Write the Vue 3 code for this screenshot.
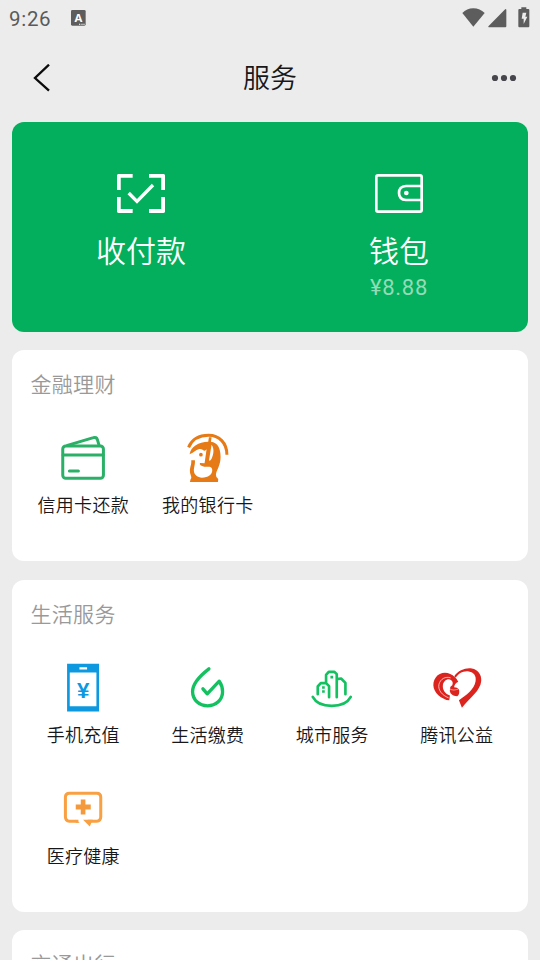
<script setup>
const sections = [
  {
    title: '金融理财',
    items: [
      { name: '信用卡还款', icon: 'card' },
      { name: '我的银行卡', icon: 'bank' },
    ],
  },
  {
    title: '生活服务',
    items: [
      { name: '手机充值', icon: 'phone' },
      { name: '生活缴费', icon: 'utility' },
      { name: '城市服务', icon: 'city' },
      { name: '腾讯公益', icon: 'charity' },
      { name: '医疗健康', icon: 'health' },
    ],
  },
  { title: '交通出行', items: [] },
]

const viewBoxes = {
  card: '159.75 336 180 156',
  bank: '83.25 36 180 156',
  phone: '99.75 214.5 180 156',
  utility: '53.25 34.5 180 156',
  city: '51.75 34.5 180 156',
  charity: '50.25 34.5 180 156',
  health: '69.75 7.5 180 156',
}
</script>

<template>
  <div class="screen">
    <div class="status">
      <span class="time">9:26</span>
      <svg class="ime" width="15" height="16" viewBox="0 0 45 48">
        <rect width="44" height="47" rx="4" fill="#5d5d5d" />
        <text x="22" y="35" text-anchor="middle" class="ime-letter">A</text>
        <path d="M24 41h4v3h-4zM31 41h4v3h-4zM37 41h4v3h-4z" fill="#fff" />
      </svg>
      <svg class="signals" width="68" height="21" viewBox="578 20 204 63">
        <g fill="#5d5d5d">
          <path d="M579 38Q592 24 612 24T646 38L612 79Z" />
          <path d="M709 26Q711 26 711 29V78Q711 81 708 81H658Q655 80 658 77L706 28Z" />
          <path d="M756 21h15v5h6q3 0 3 3v49q0 3-3 3h-27q-3 0-3-3V29q0-3 3-3h6z" />
        </g>
        <path d="M760 37h11l-3 12h6l-11 22v-16h-6z" fill="#ececec" />
      </svg>
    </div>

    <header class="nav">
      <svg class="back" width="18" height="28" viewBox="100 192 54 84">
        <path d="M148 194L106 234L148 272" fill="none" stroke="#0b0b0b" stroke-width="7" />
      </svg>
      <h1>服务</h1>
      <svg class="more" width="26" height="8" viewBox="0 0 26 8" fill="#47464c">
        <circle cx="4" cy="4" r="3.1" /><circle cx="13" cy="4" r="3.1" /><circle cx="22" cy="4" r="3.1" />
      </svg>
    </header>

    <section class="hero">
      <div class="hero-item">
        <svg width="48" height="40" viewBox="111 42 144 120" fill="none" stroke="#fff">
          <path d="M158 47.500H116.500V90M207 47.500H249.500V90M158 153H116.500V111M207 153H249.500V111" stroke-width="11.500" stroke-linejoin="round" />
          <path d="M146 99L171 124L219 75" stroke-width="10" />
        </svg>
        <span class="hero-name">收付款</span>
      </div>
      <div class="hero-item">
        <svg width="48" height="40" viewBox="105 42 144 120" fill="none" stroke="#fff" stroke-width="8">
          <rect x="109" y="46" width="136" height="109" rx="5" />
          <path d="M245 78H198Q177 79 177 99T198 120H245" />
          <circle cx="199" cy="99" r="7" fill="#fff" stroke="none" />
        </svg>
        <span class="hero-name">钱包</span>
        <span class="balance">¥8.88</span>
      </div>
    </section>

    <section v-for="section in sections" :key="section.title" class="panel">
      <h2>{{ section.title }}</h2>
      <div class="grid">
        <div v-for="item in section.items" :key="item.name" class="cell">
          <svg width="60" height="52" :viewBox="viewBoxes[item.icon]" fill="none">
            <g v-if="item.icon === 'card'" stroke="#2bb067" stroke-width="9" stroke-linecap="round" stroke-linejoin="round">
              <rect x="189" y="378" width="122" height="97" rx="9" />
              <path d="M190 405H310M209 453H236M203 376L281 353Q290 350 293 359L298 376" />
            </g>
            <g v-else-if="item.icon === 'bank'">
              <path d="M115 82C126 57 150 46 175 46C207 46 230 69 230 104" stroke="#e57a16" stroke-width="9" />
              <path d="M118 103C122 79 145 66 174 65L176 52H184L182 65C202 67 211 84 211 111C211 137 198 151 197 164Q197 173 204 177L203 186H119L121 178C127 172 119 165 119 153C119 140 124 136 123 121H134C135 136 130 143 131 154C132 165 142 173 155 173C174 173 186 164 186 151C186 145 184 142 178 140L162 140C152 138 147 135 149 129L163 130L169 88C161 99 157 83 145 88C134 92 131 98 118 103Z" fill="#e57a16" />
              <path d="M184 74C194 88 189 108 181 121L176 122Z" fill="#fff" />
              <circle cx="152" cy="104" r="5.500" fill="#e57a16" />
            </g>
            <g v-else-if="item.icon === 'phone'">
              <path d="M142 220H238V363H142Z" fill="#0d98df" />
              <path d="M150 246H230V347H150ZM179 230H202V237H179Z" fill="#fff" />
              <text x="190.500" y="321" text-anchor="middle" class="yen">¥</text>
            </g>
            <path v-else-if="item.icon === 'utility'" d="M146 55C124 72 97 95 97 123C97 148 117 166 142 166S187 148 187 124Q187 106 177 92L141 130L128 115" stroke="#14c160" stroke-width="10" stroke-linecap="round" stroke-linejoin="round" />
            <g v-else-if="item.icon === 'city'" stroke="#14c160" stroke-width="8" stroke-linecap="round" stroke-linejoin="round">
              <path d="M84 139C94 158 116 166 141 166S188 158 198 139" />
              <path d="M99 131V108L108 98H124L133 107V140M124 96V73L132 64H149L156 71V140M157 86L169 84L182 97V131" />
              <path d="M112 107h8v8h-8zM112 119h8v8h-8zM137 76h8v8h-8z" fill="#14c160" stroke="none" />
            </g>
            <g v-else-if="item.icon === 'charity'">
              <path d="M132 77C145 59 166 51 185 54C203 57 214 72 213 91C211 121 178 143 155 172L146 149C168 134 192 116 196 92C199 76 190 65 176 63C159 60 145 69 136 82Z" fill="#dc241f" />
              <path d="M134 80C118 62 89 62 77 80C62 100 70 125 92 140Q106 149 117 149L119 135C105 131 96 119 98 103C101 89 114 82 123 89Q130 95 126 104Q120 107 119 113H131Q133 98 144 94Q141 85 134 80Z" fill="#dc241f" />
              <path d="M115 142C95 134 83 119 86 102C90 85 106 77 121 82" stroke="#fff" stroke-width="2" />
              <path d="M120 113Q137 107 146 116Q150 130 141 137Q128 137 121 128Q117 121 120 113Z" fill="#dc241f" />
              <path d="M120 117Q130 121 145 116" stroke="#fff" stroke-width="1.500" />
            </g>
            <g v-else>
              <path d="M146 122H119Q107 122 107 109V50Q107 38 119 38H201Q213 38 213 50V109Q213 122 201 122H174" stroke="#f9a043" stroke-width="9" />
              <path d="M160 118H189L180 138ZM138 118L150 127H138Z" fill="#f9a043" />
              <path d="M153 57H167V72H183V87H167V102H153V87H138V72H153Z" fill="#f49a3c" />
            </g>
          </svg>
          <span class="name">{{ item.name }}</span>
        </div>
      </div>
    </section>
  </div>
</template>

<style>
body {
  background: #ececec;
}
</style>

<style scoped>
.screen {
  box-sizing: border-box;
  width: 540px;
  height: 960px;
  overflow: hidden;
  background: #ececec;
  font-family: Roboto, "Noto Sans CJK SC", sans-serif;
  font-weight: 350;
  color: #17171a;
}

.status {
  display: flex;
  align-items: center;
  box-sizing: border-box;
  height: 36px;
  padding: 0 10px 0 9px;
}

.time {
  width: 62px;
  padding-top: 2px;
  font-size: 20.500px;
  font-weight: 400;
  letter-spacing: 0.7px;
  color: #5a5a5a;
}

.ime-letter {
  font: bold 34px "Open Sans", sans-serif;
  fill: #fff;
}

.signals {
  margin-left: auto;
  margin-bottom: 2px;
}

.nav {
  display: grid;
  grid-template-columns: 1fr auto 1fr;
  align-items: center;
  box-sizing: border-box;
  height: 86px;
  padding: 0 23px 3px 33px;
}

.nav h1 {
  margin: 2px 0 0 -10px;
  font-size: 27px;
  font-weight: 350;
  line-height: 40px;
}

.more {
  justify-self: end;
}

.hero {
  display: grid;
  grid-template-columns: 1fr 1fr;
  box-sizing: border-box;
  height: 210px;
  margin: 0 12px 18px;
  padding-top: 52px;
  border-radius: 12px;
  background: #03af5c;
  color: #fff;
}

.hero-item {
  display: flex;
  flex-direction: column;
  align-items: center;
}

.hero-name {
  margin-top: 17px;
  font-size: 30px;
  line-height: 42px;
}

.balance {
  font-size: 22px;
  font-weight: 400;
  line-height: 30px;
  letter-spacing: 0.7px;
  color: #94dbb8;
}

.panel {
  margin: 0 12px 18.500px;
  padding: 18px 9px 8px;
  border-radius: 12px;
  background: #fff;
}

.panel h2 {
  margin: 0 0 30px 9.500px;
  font-size: 21px;
  font-weight: 350;
  line-height: 34px;
  letter-spacing: 0.3px;
  color: #999;
}

.grid {
  display: grid;
  grid-template-columns: repeat(4, 1fr);
  grid-auto-rows: 121px;
}

.cell {
  display: flex;
  flex-direction: column;
  align-items: center;
}

.name {
  margin-top: 10px;
  font-size: 18px;
  line-height: 24px;
  letter-spacing: 0.3px;
  white-space: nowrap;
}

.yen {
  font: bold 67px "Liberation Sans", sans-serif;
  fill: #0d98df;
}
</style>
